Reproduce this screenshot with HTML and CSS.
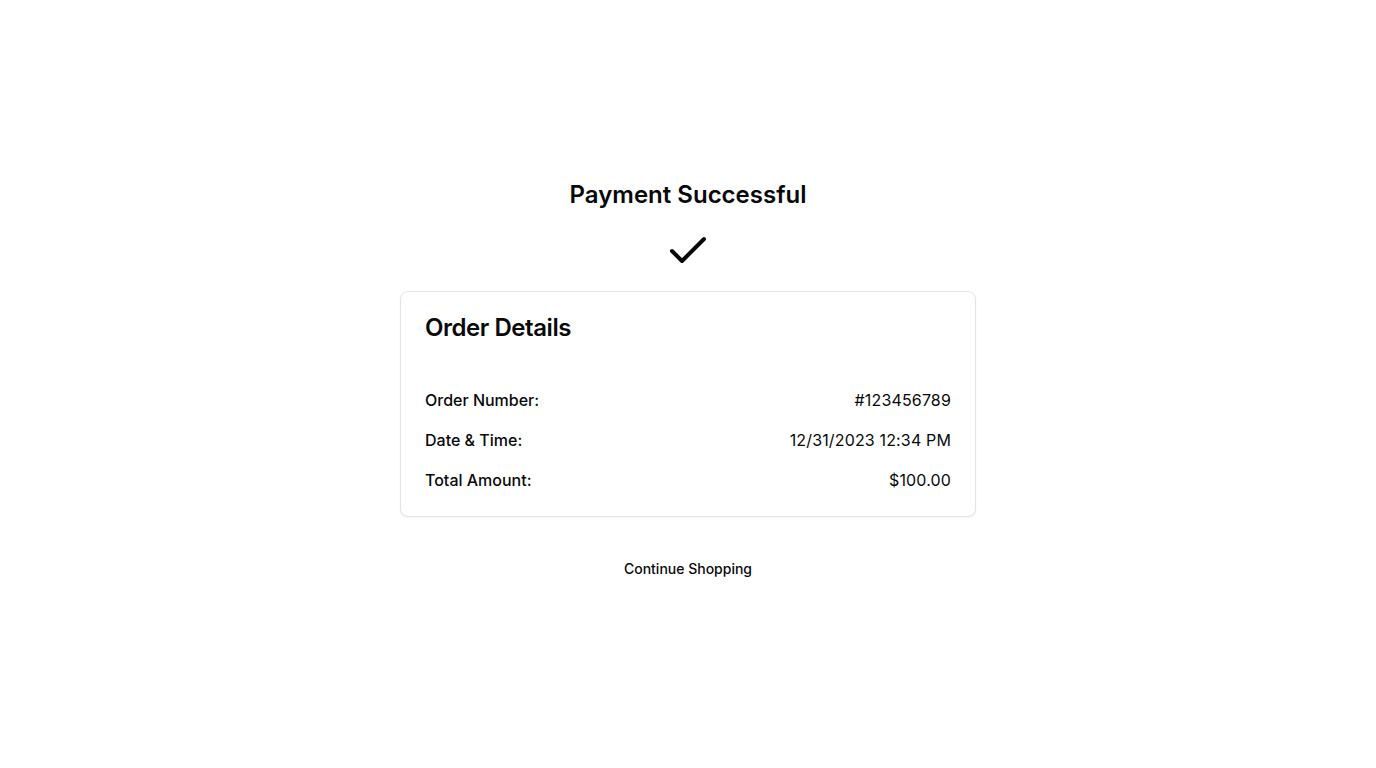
FILE: index.html
```html
<!DOCTYPE html>
<html lang="en">
<head>
<meta charset="utf-8">
<title>Payment Successful</title>
<link rel="stylesheet" href="styles.css">
</head>
<body>
<main class="page">
  <h1 class="title">Payment Successful</h1>
  <svg class="check" width="48" height="48" viewBox="0 0 24 24" fill="none" stroke="currentColor" stroke-width="2" stroke-linecap="round" stroke-linejoin="round"><path d="M20 6 9 17l-5-5"/></svg>
  <section class="card">
    <div class="card-header">
      <h2 class="card-title">Order Details</h2>
    </div>
    <div class="card-content">
      <div class="row"><span class="label">Order Number:</span><span class="value">#123456789</span></div>
      <div class="row"><span class="label">Date &amp; Time:</span><span class="value">12/31/2023 12:34 PM</span></div>
      <div class="row"><span class="label">Total Amount:</span><span class="value">$100.00</span></div>
    </div>
  </section>
  <button class="btn" type="button">Continue Shopping</button>
</main>
</body>
</html>
```

FILE: styles.css
```css
* { box-sizing: border-box; }
html, body { margin: 0; padding: 0; background: #fff; }
body {
  font-family: Inter, "Liberation Sans", sans-serif;
  color: #09090b;
}
.page {
  min-height: 100vh;
  padding-bottom: 1px;
  display: flex;
  flex-direction: column;
  align-items: center;
  justify-content: center;
  gap: 16px;
}
.title {
  margin: 0;
  font-size: 24px;
  line-height: 32px;
  font-weight: 600;
}
.check { display: block; color: #09090b; }
.card {
  width: 576px;
  border: 1px solid #e4e4e7;
  border-radius: 8px;
  background: #fff;
  box-shadow: 0 1px 2px rgba(0,0,0,0.05);
}
.card-header { padding: 24px 24px 0; }
.card-title {
  margin: 0;
  font-size: 24px;
  line-height: 24px;
  font-weight: 600;
  letter-spacing: -0.45px;
}
.card-content {
  padding: 48px 24px 24px;
  display: flex;
  flex-direction: column;
  gap: 16px;
}
.row {
  display: flex;
  justify-content: space-between;
  font-size: 16px;
  line-height: 24px;
}
.label { font-weight: 500; }
.value { font-weight: 400; letter-spacing: 0.15px; }
.btn {
  margin-top: 15px;
  height: 40px;
  padding: 0 16px;
  border: none;
  background: transparent;
  font-family: inherit;
  font-size: 14px;
  font-weight: 500;
  color: #09090b;
  border-radius: 6px;
  cursor: pointer;
}
```
